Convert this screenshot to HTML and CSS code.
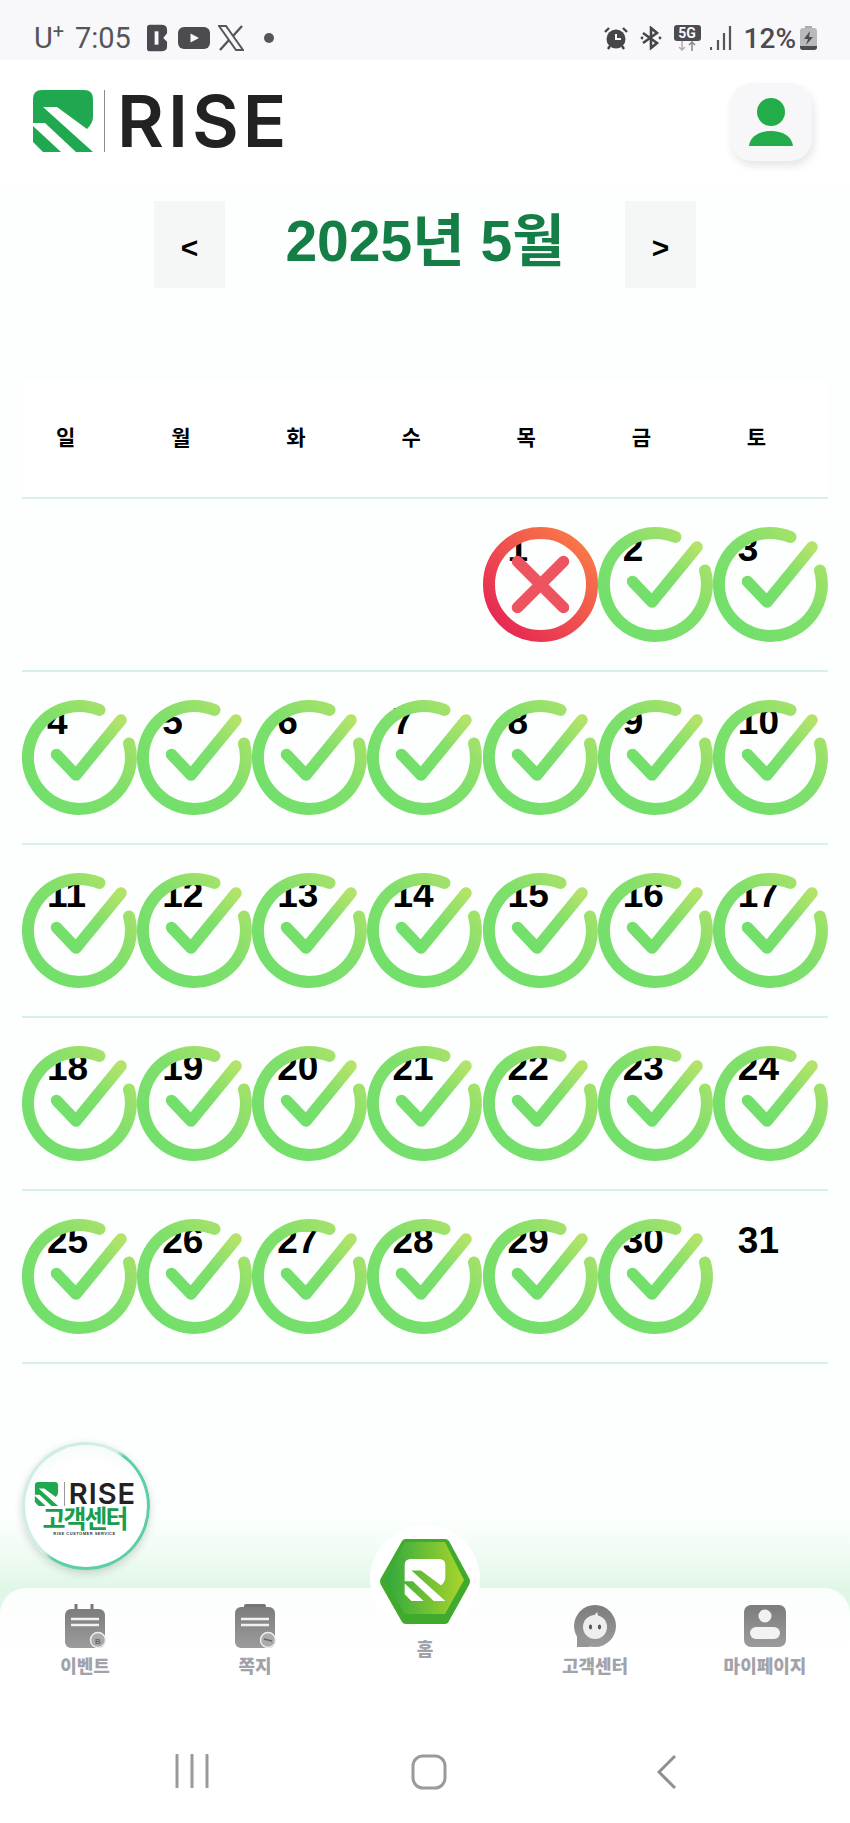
FILE: index.html
```html
<!DOCTYPE html>
<html lang="ko">
<head>
<meta charset="utf-8">
<title>RISE</title>
<link rel="stylesheet" href="styles.css">
</head>
<body>
<svg class="defs" width="0" height="0" aria-hidden="true">
  <defs>
    <linearGradient id="okG" x1="0" y1="1" x2="1" y2="0">
      <stop offset="0" stop-color="#6fdf6c"/><stop offset=".55" stop-color="#80df6b"/><stop offset="1" stop-color="#b4e36a"/>
    </linearGradient>
    <linearGradient id="noG" x1="0" y1="1" x2="1" y2="0">
      <stop offset="0" stop-color="#e41f55"/><stop offset="1" stop-color="#fb8147"/>
    </linearGradient>
    <linearGradient id="hexG" x1="0" y1="0" x2="1" y2="0">
      <stop offset="0" stop-color="#2fa83f"/><stop offset="1" stop-color="#a9d52c"/>
    </linearGradient>
    <linearGradient id="grayG" x1="0" y1="0" x2="0" y2="1">
      <stop offset="0" stop-color="#7c7c7c"/><stop offset="1" stop-color="#9c9c9c"/>
    </linearGradient>
    <symbol id="ok" viewBox="0 0 115 115" overflow="visible">
      <path d="M77.5 10A51.5 51.5 0 1 0 107 43.5" fill="none" stroke="url(#okG)" stroke-width="12" stroke-linecap="round"/>
      <path d="M34.5 54.5L54 75L99 20" fill="none" stroke="url(#okG)" stroke-width="11.5" stroke-linecap="round" stroke-linejoin="round"/>
    </symbol>
    <symbol id="no" viewBox="0 0 115 115" overflow="visible">
      <circle cx="57.5" cy="57.5" r="51.5" fill="none" stroke="url(#noG)" stroke-width="12"/>
      <path d="M34.5 34.5L80.5 80.5M80.5 34.5L34.5 80.5" fill="none" stroke="#ee5360" stroke-width="11.5" stroke-linecap="round"/>
    </symbol>
    <symbol id="mark" viewBox="0 0 60 62">
      <path d="M9 0H51Q60 0 60 9V27Q60 33 54 39L24 17H10L60 62H43L12 33H0V9Q0 0 9 0Z"/>
      <path d="M0 36L28 62H10L0 52Z"/>
    </symbol>
  </defs>
</svg>

<div class="status">
  <div class="status-left">
    <span class="carrier">U<sup>+</sup></span>
    <span class="clock">7:05</span>
    <svg class="st-b" viewBox="0 0 22 28"><path d="M0 3Q0 0 3 0H15Q21 0 21 5V9L17 14L21 18V23Q21 28 15 28H3Q0 28 0 25Z" fill="#4b4950"/><path d="M8 7H12V21H8Z" fill="#f8f8fa"/></svg>
    <svg class="st-yt" viewBox="0 0 32 22"><rect width="32" height="22" rx="6" fill="#4b4b50"/><path d="M12.5 6.5L21 11L12.5 15.5Z" fill="#f8f8fa"/></svg>
    <svg class="st-x" viewBox="0 0 26 26"><path d="M1 1H8L25 25H18Z" fill="none" stroke="#55555a" stroke-width="2"/><path d="M24 1L15 11M11 15L2 25" fill="none" stroke="#55555a" stroke-width="2.4"/></svg>
    <span class="st-dot"></span>
  </div>
  <div class="status-right">
    <svg class="st-alarm" viewBox="0 0 24 24"><circle cx="12" cy="13" r="9.5" fill="#45454a"/><path d="M12 8V13H17" fill="none" stroke="#f8f8fa" stroke-width="2"/><path d="M1 6L5 2M23 6L19 2M4 23L6 20M20 23L18 20" stroke="#45454a" stroke-width="2.4" fill="none"/></svg>
    <svg class="st-bt" viewBox="0 0 22 24"><path d="M3 7L17 17L11 22V2L17 7L3 17" fill="none" stroke="#45454a" stroke-width="2.6"/><circle cx="2" cy="12" r="1.4" fill="#45454a"/><circle cx="20" cy="12" r="1.4" fill="#45454a"/></svg>
    <span class="st-5g"><b class="badge5g">5G</b><svg viewBox="0 0 24 10"><path d="M7 0V9M4 6L7 9L10 6" fill="none" stroke="#b4b4b8" stroke-width="1.6"/><path d="M17 10V1M14 4L17 1L20 4" fill="none" stroke="#8c8c90" stroke-width="1.6"/></svg></span>
    <svg class="st-sig" viewBox="0 0 22 24"><path d="M1 21V24M8 14V24M14 7V24M20 0V24" stroke="#55555a" stroke-width="2.2" fill="none"/></svg>
    <span class="pct">12%</span>
    <svg class="st-bat" viewBox="0 0 17 24"><path d="M5 0H12V2H5Z" fill="#aaa"/><rect y="2" width="17" height="22" rx="3" fill="#b9b9bc"/><path d="M0 20H17V21Q17 24 14 24H3Q0 24 0 21Z" fill="#4b4b50"/><path d="M10 5L4 13H8L6 19L13 11H9Z" fill="#4b4b50"/></svg>
  </div>
</div>

<header class="top">
  <div class="logo">
    <svg class="logo-mark"><use href="#mark"/></svg>
    <span class="logo-rule"></span>
    <span class="logo-word">RISE</span>
  </div>
  <button class="profile" type="button" aria-label="프로필">
    <svg viewBox="0 0 44 48"><circle cx="22" cy="14" r="14" fill="#22ad4a"/><path d="M0 48C1 38 11 33 22 33S43 38 44 48Z" fill="#22ad4a"/></svg>
  </button>
</header>

<main class="main">
  <nav class="month">
    <button class="month-btn" type="button">&lt;</button>
    <h1 class="month-title">2025년 5월</h1>
    <button class="month-btn" type="button">&gt;</button>
  </nav>

  <section class="cal">
    <div class="week head">
      <div>일</div><div>월</div><div>화</div><div>수</div><div>목</div><div>금</div><div>토</div>
    </div>
    <div class="week">
      <div class="day"></div><div class="day"></div><div class="day"></div><div class="day"></div>
      <div class="day"><span>1</span><svg class="stamp"><use href="#no"/></svg></div>
      <div class="day"><span>2</span><svg class="stamp"><use href="#ok"/></svg></div>
      <div class="day"><span>3</span><svg class="stamp"><use href="#ok"/></svg></div>
    </div>
    <div class="week">
      <div class="day"><span>4</span><svg class="stamp"><use href="#ok"/></svg></div>
      <div class="day"><span>5</span><svg class="stamp"><use href="#ok"/></svg></div>
      <div class="day"><span>6</span><svg class="stamp"><use href="#ok"/></svg></div>
      <div class="day"><span>7</span><svg class="stamp"><use href="#ok"/></svg></div>
      <div class="day"><span>8</span><svg class="stamp"><use href="#ok"/></svg></div>
      <div class="day"><span>9</span><svg class="stamp"><use href="#ok"/></svg></div>
      <div class="day"><span>10</span><svg class="stamp"><use href="#ok"/></svg></div>
    </div>
    <div class="week">
      <div class="day"><span>11</span><svg class="stamp"><use href="#ok"/></svg></div>
      <div class="day"><span>12</span><svg class="stamp"><use href="#ok"/></svg></div>
      <div class="day"><span>13</span><svg class="stamp"><use href="#ok"/></svg></div>
      <div class="day"><span>14</span><svg class="stamp"><use href="#ok"/></svg></div>
      <div class="day"><span>15</span><svg class="stamp"><use href="#ok"/></svg></div>
      <div class="day"><span>16</span><svg class="stamp"><use href="#ok"/></svg></div>
      <div class="day"><span>17</span><svg class="stamp"><use href="#ok"/></svg></div>
    </div>
    <div class="week">
      <div class="day"><span>18</span><svg class="stamp"><use href="#ok"/></svg></div>
      <div class="day"><span>19</span><svg class="stamp"><use href="#ok"/></svg></div>
      <div class="day"><span>20</span><svg class="stamp"><use href="#ok"/></svg></div>
      <div class="day"><span>21</span><svg class="stamp"><use href="#ok"/></svg></div>
      <div class="day"><span>22</span><svg class="stamp"><use href="#ok"/></svg></div>
      <div class="day"><span>23</span><svg class="stamp"><use href="#ok"/></svg></div>
      <div class="day"><span>24</span><svg class="stamp"><use href="#ok"/></svg></div>
    </div>
    <div class="week">
      <div class="day"><span>25</span><svg class="stamp"><use href="#ok"/></svg></div>
      <div class="day"><span>26</span><svg class="stamp"><use href="#ok"/></svg></div>
      <div class="day"><span>27</span><svg class="stamp"><use href="#ok"/></svg></div>
      <div class="day"><span>28</span><svg class="stamp"><use href="#ok"/></svg></div>
      <div class="day"><span>29</span><svg class="stamp"><use href="#ok"/></svg></div>
      <div class="day"><span>30</span><svg class="stamp"><use href="#ok"/></svg></div>
      <div class="day"><span>31</span></div>
    </div>
  </section>
</main>

<a class="fab" href="#">
  <span class="fab-logo">
    <svg class="fab-mark"><use href="#mark"/></svg>
    <span class="fab-rule"></span>
    <span class="fab-word">RISE</span>
  </span>
  <span class="fab-title">고객센터</span>
  <span class="fab-sub">RISE CUSTOMER SERVICE</span>
</a>

<footer class="tabs">
  <a class="tab" href="#">
    <svg class="tab-ico" viewBox="0 0 40 44"><path d="M11 0V10M27 0V10" stroke="#777" stroke-width="3" fill="none"/><rect y="5" width="40" height="39" rx="6" fill="url(#grayG)"/><path d="M6 15H34M6 21H34" stroke="#f2f2f2" stroke-width="2.6"/><circle cx="33" cy="36" r="7.5" fill="#aaa" stroke="#eee" stroke-width="1.5"/><text class="badge-b" x="33" y="39.5" text-anchor="middle">B</text></svg>
    <span>이벤트</span>
  </a>
  <a class="tab" href="#">
    <svg class="tab-ico" viewBox="0 0 40 44"><rect x="9" y="0" width="22" height="6" rx="2" fill="#757575"/><rect y="3" width="40" height="41" rx="6" fill="url(#grayG)"/><path d="M6 15H34M6 21H34" stroke="#f2f2f2" stroke-width="2.6"/><circle cx="33" cy="36" r="7.5" fill="#aaa" stroke="#eee" stroke-width="1.5"/><path d="M29 35L37 37" stroke="#666" stroke-width="1.5"/></svg>
    <span>쪽지</span>
  </a>
  <a class="tab tab-home" href="#">
    <span class="home-disc">
      <svg class="home-hex" viewBox="0 0 90 85">
        <path d="M22 2Q23 0 26 0H65Q68 0 69 2L89 39Q91 42 89 46L69 82Q68 85 65 85H26Q23 85 22 83L1 46Q-1 42 1 39Z" fill="#3faa2c"/>
        <path d="M25 3H65L84 41L65 75H25L5 41Z" fill="url(#hexG)"/>
        <use class="home-mark" href="#mark" x="23" y="20" width="44" height="42"/>
      </svg>
    </span>
    <span>홈</span>
  </a>
  <a class="tab" href="#">
    <svg class="tab-ico" viewBox="0 0 42 42"><circle cx="21" cy="21" r="21" fill="url(#grayG)"/><path d="M3 28V42H16Z" fill="#959595"/><circle cx="21" cy="22" r="12" fill="#eee"/><path d="M19 11Q22 9 23 7Q24 9 24 11Z" fill="#eee"/><ellipse cx="16.5" cy="22" rx="1.6" ry="2.4" fill="#555"/><ellipse cx="25.5" cy="22" rx="1.6" ry="2.4" fill="#555"/></svg>
    <span>고객센터</span>
  </a>
  <a class="tab" href="#">
    <svg class="tab-ico" viewBox="0 0 42 42"><rect width="42" height="42" rx="7" fill="url(#grayG)"/><circle cx="21" cy="11" r="6.5" fill="#f2f2f2"/><rect x="6" y="22" width="30" height="12" rx="6" fill="#f2f2f2"/></svg>
    <span>마이페이지</span>
  </a>
</footer>

<div class="sysnav">
  <svg class="sys-recent" viewBox="0 0 34 34"><path d="M2 1V33M17 1V33M32 1V33" stroke="#9a9a9c" stroke-width="3" stroke-linecap="round" fill="none"/></svg>
  <svg class="sys-home" viewBox="0 0 36 36"><rect x="2" y="2" width="32" height="32" rx="10" fill="none" stroke="#9a9a9c" stroke-width="3"/></svg>
  <svg class="sys-back" viewBox="0 0 20 36"><path d="M18 2L2 18L18 34" stroke="#8f8f92" stroke-width="3" fill="none"/></svg>
</div>
</body>
</html>
```
FILE: styles.css
```css
* { box-sizing: border-box; }
html, body { margin: 0; padding: 0; }
body {
  position: relative;
  width: 850px;
  height: 1823px;
  overflow: hidden;
  display: flex;
  flex-direction: column;
  background: #e0f7e7;
  font-family: "Liberation Sans", "Noto Sans CJK KR", sans-serif;
  color: #000;
}
a { text-decoration: none; color: inherit; }
button { border: 0; padding: 0; font-family: inherit; }
.defs { position: absolute; }

/* status bar */
.status {
  height: 60px;
  flex: none;
  display: flex;
  align-items: center;
  justify-content: space-between;
  padding: 16px 33px 0 34px;
  background: #f8f8fa;
  color: #55555a;
}
.status-left, .status-right { display: flex; align-items: center; }
.carrier { font: 400 29px "Roboto", sans-serif; width: 41px; }
.carrier sup { font-size: 20px; line-height: 0; vertical-align: 10px; }
.clock { font: 400 29px "Roboto", sans-serif; width: 72px; }
.st-b { width: 21px; height: 28px; margin-right: 10px; }
.st-yt { width: 32px; height: 22px; margin-right: 8px; }
.st-x { width: 26px; height: 26px; }
.st-dot { width: 10px; height: 10px; margin-left: 20px; border-radius: 50%; background: #55555a; }
.st-alarm { width: 24px; height: 24px; margin-right: 12px; }
.st-bt { width: 22px; height: 24px; margin-right: 12px; }
.st-5g { display: flex; flex-direction: column; align-items: center; width: 27px; margin-right: 9px; }
.st-5g svg { width: 24px; height: 10px; }
.badge5g {
  width: 27px;
  height: 16px;
  border-radius: 3px;
  background: #4b4b50;
  color: #f8f8fa;
  font: 700 14px/16px "Roboto", sans-serif;
  text-align: center;
}
.st-sig { width: 22px; height: 24px; margin-right: 12px; }
.pct { font: 500 28px "Roboto", sans-serif; margin-right: 4px; color: #4b4b50; }
.st-bat { width: 17px; height: 24px; }

/* header */
.top {
  height: 123px;
  flex: none;
  display: flex;
  align-items: flex-start;
  justify-content: space-between;
  padding: 23px 38px 0 33px;
  background: #fff;
}
.logo { display: flex; align-items: center; height: 62px; margin-top: 7px; }
.logo-mark { width: 60px; height: 62px; color: #1fa84f; fill: currentColor; }
.logo-rule { width: 1px; height: 62px; margin: 0 12px 0 11px; background: #8d8d8d; }
.logo-word {
  font-family: "Inter", "Liberation Sans", sans-serif;
  font-size: 72px;
  line-height: 62px;
  font-weight: 600;
  color: #222224;
  letter-spacing: 4px;
}
.profile {
  width: 82px;
  height: 78px;
  display: flex;
  align-items: center;
  justify-content: center;
  border-radius: 22px;
  background: #f7f7f9;
  box-shadow: 2px 5px 8px rgba(0, 0, 0, .1);
}
.profile svg { width: 44px; height: 48px; }

/* month switch + calendar */
.main {
  flex: 1;
  min-height: 0;
  display: flex;
  flex-direction: column;
  padding: 18px 22px 0;
  background: linear-gradient(#fcfffd 0, #fcfffd 1335px, #eefbf2 1375px, #e0f7e7 1405px);
}
.month { display: flex; justify-content: center; align-items: center; gap: 52px; height: 87px; }
.month-btn {
  width: 71px;
  height: 87px;
  padding-top: 6px;
  background: #f5f7f6;
  color: #000;
  font-size: 30px;
  font-weight: 700;
}
.month-title {
  width: 296px;
  margin: 0;
  padding-bottom: 6px;
  color: #157e46;
  font-size: 57px;
  font-weight: 700;
  line-height: 81px;
  text-align: center;
  white-space: nowrap;
}
.cal { margin-top: 92px; }
.week {
  display: grid;
  grid-template-columns: repeat(7, 1fr);
  height: 173px;
  border-bottom: 2px solid #d6f1e6;
}
.head {
  height: 119px;
  padding-bottom: 6px;
  align-items: center;
  background: #fff;
  font-size: 21px;
  font-weight: 700;
}
.head div { padding-left: 34px; }
.day {
  position: relative;
  padding: 29px 0 0 25px;
  font-size: 37px;
  font-weight: 700;
  line-height: 41px;
}
.stamp {
  position: absolute;
  left: 0;
  top: 28px;
  width: 115px;
  height: 115px;
  overflow: visible;
}

/* floating service button */
.fab {
  position: absolute;
  left: 22px;
  top: 1442px;
  width: 128px;
  height: 128px;
  padding-right: 3px;
  display: flex;
  flex-direction: column;
  align-items: center;
  justify-content: center;
  border: 3px solid transparent;
  border-radius: 50%;
  background:
    radial-gradient(circle at 50% 58%, #fff 58%, #e6f7f0 100%) padding-box,
    conic-gradient(#d2efe5 0 30deg, #5ccfa4 38deg 212deg, #cfeee3 222deg 360deg) border-box;
  box-shadow: 0 3px 9px rgba(0, 0, 0, .16);
}
.fab-logo { display: flex; align-items: center; height: 24px; margin-top: 7px; }
.fab-mark { width: 27px; height: 24px; color: #1fa84f; fill: currentColor; }
.fab-rule { width: 1px; height: 24px; margin: 0 4px; background: #999; }
.fab-word {
  font-family: "Inter", "Liberation Sans", sans-serif;
  font-size: 29px;
  line-height: 24px;
  font-weight: 600;
  letter-spacing: 1px;
  color: #222224;
}
.fab-title {
  font-size: 25px;
  line-height: 22px;
  font-weight: 700;
  color: #1a9d4c;
  letter-spacing: -2px;
  margin-top: 2px;
}
.fab-sub { font-size: 4px; line-height: 6px; font-weight: 700; color: #333; letter-spacing: .5px; margin-top: 1px; }

/* bottom tab bar */
.tabs {
  position: relative;
  height: 152px;
  flex: none;
  display: grid;
  grid-template-columns: repeat(5, 170px);
  padding-top: 16px;
  background: linear-gradient(#fbfefc, #fff 50%);
  border-radius: 26px 26px 0 0;
  color: #a2a2aa;
  font-size: 18px;
  font-weight: 900;
  text-align: center;
}
.tab { display: flex; flex-direction: column; align-items: center; gap: 4px; }
.tab-ico { width: 42px; height: 44px; }
.badge-b { font-size: 8px; font-weight: 700; fill: #666; }
.tab-home { position: relative; padding-top: 31px; }
.home-disc {
  position: absolute;
  left: 30px;
  top: -79px;
  width: 110px;
  height: 108px;
  display: flex;
  align-items: center;
  justify-content: center;
  border-radius: 50%;
  background: #fff;
}
.home-hex { width: 90px; height: 85px; margin-top: 5px; }
.home-mark { color: #fff; fill: currentColor; }

/* android nav */
.sysnav {
  position: relative;
  height: 83px;
  flex: none;
  background: #fff;
}
.sys-recent { position: absolute; left: 175px; top: 14px; width: 34px; height: 34px; }
.sys-home { position: absolute; left: 411px; top: 14px; width: 36px; height: 36px; }
.sys-back { position: absolute; left: 657px; top: 14px; width: 20px; height: 36px; }
```
